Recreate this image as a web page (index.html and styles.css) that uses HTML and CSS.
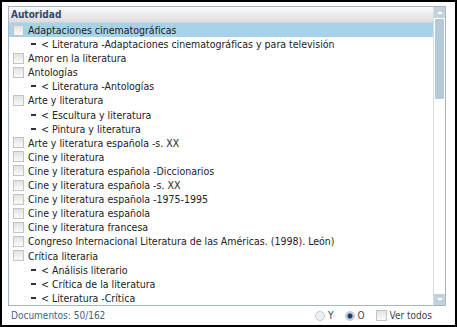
FILE: index.html
```html
<!DOCTYPE html>
<html lang="es">
<head>
  <meta charset="UTF-8">
  <title>Autoridad</title>
  <link rel="stylesheet" href="styles.css">
</head>
<body>
  <div class="frame">
    <div class="panel">
      <div class="list">
        <div class="list-head">Autoridad</div>
        <div class="rows">
          <div class="row selected"><span class="check"></span>Adaptaciones cinematográficas</div>
          <div class="row sub"><span class="dash"></span>&lt; Literatura -Adaptaciones cinematográficas y para televisión</div>
          <div class="row"><span class="check"></span>Amor en la literatura</div>
          <div class="row"><span class="check"></span>Antologías</div>
          <div class="row sub"><span class="dash"></span>&lt; Literatura -Antologías</div>
          <div class="row"><span class="check"></span>Arte y literatura</div>
          <div class="row sub"><span class="dash"></span>&lt; Escultura y literatura</div>
          <div class="row sub"><span class="dash"></span>&lt; Pintura y literatura</div>
          <div class="row"><span class="check"></span>Arte y literatura española -s. XX</div>
          <div class="row"><span class="check"></span>Cine y literatura</div>
          <div class="row"><span class="check"></span>Cine y literatura española -Diccionarios</div>
          <div class="row"><span class="check"></span>Cine y literatura española -s. XX</div>
          <div class="row"><span class="check"></span>Cine y literatura española -1975-1995</div>
          <div class="row"><span class="check"></span>Cine y literatura española</div>
          <div class="row"><span class="check"></span>Cine y literatura francesa</div>
          <div class="row"><span class="check"></span>Congreso Internacional Literatura de las Américas. (1998). León)</div>
          <div class="row"><span class="check"></span>Crítica literaria</div>
          <div class="row sub"><span class="dash"></span>&lt; Análisis literario</div>
          <div class="row sub"><span class="dash"></span>&lt; Crítica de la literatura</div>
          <div class="row sub"><span class="dash"></span>&lt; Literatura -Crítica</div>
        </div>
      </div>
      <div class="scrollbar">
        <div class="arrow up"></div>
        <div class="track"><div class="thumb"></div></div>
        <div class="arrow down"></div>
      </div>
    </div>
    <div class="footer">
      <span class="count">Documentos: 50/162</span>
      <div class="options">
        <label class="opt"><span class="radio"></span>Y</label>
        <label class="opt"><span class="radio on"></span>O</label>
        <label class="opt"><span class="check"></span>Ver todos</label>
      </div>
    </div>
  </div>
</body>
</html>
```

FILE: styles.css
```css
body { margin: 0; background: #fff; font-family: "DejaVu Sans Condensed", "DejaVu Sans", sans-serif; font-size: 10.5px; color: #222; }
.frame {
  width: 457px;
  height: 327px;
  box-sizing: border-box;
  border: 2px solid #000;
  padding: 4px 9px 0 6px;
  display: flex;
  flex-direction: column;
}
.panel {
  height: 300px;
  box-sizing: border-box;
  border: 1px solid #a7b6c2;
  display: flex;
  overflow: hidden;
}
.list { flex: 1; min-width: 0; }
.list-head {
  height: 15px;
  line-height: 15px;
  padding-left: 2px;
  font-size: 10px;
  font-weight: bold;
  color: #32496a;
  background: linear-gradient(#fbfbfb, #dcdcdc);
  border-bottom: 1px solid #cfd3d6;
}
.row {
  height: 14.1px;
  line-height: 14.1px;
  white-space: nowrap;
  display: flex;
  align-items: center;
  padding-left: 4px;
}
.row.selected { background: #a6d3e8; }
.row.sub { padding-left: 22px; }
.check {
  width: 9px;
  height: 9px;
  border: 1px solid #c4c4c4;
  background: linear-gradient(#e2e2e2, #fafafa);
  margin-right: 4px;
  flex: none;
}
.dash {
  width: 5px;
  height: 2px;
  background: #333;
  margin-right: 5px;
}
.scrollbar {
  width: 11px;
  border-left: 1px solid #d4dde3;
  display: flex;
  flex-direction: column;
  background: #fff;
}
.arrow {
  height: 11px;
  background: #c3d1dc;
  position: relative;
}
.arrow::after {
  content: "";
  position: absolute;
  left: 3px;
  border-left: 3px solid transparent;
  border-right: 3px solid transparent;
}
.arrow.up::after { top: 4px; border-bottom: 3px solid #fff; }
.arrow.down::after { top: 4px; border-top: 3px solid #fff; }
.track { flex: 1; padding: 1px 0 0 1px; }
.thumb { height: 80px; background: #b6c9d8; width: 9px; }
.footer {
  flex: 1;
  display: flex;
  align-items: center;
  padding-left: 3px;
  font-size: 10px;
  color: #45617f;
}
.count { flex: 1; }
.options { display: flex; align-items: center; padding-right: 14px; color: #444; }
.opt { display: flex; align-items: center; margin-left: 11px; }
.radio {
  width: 8px;
  height: 8px;
  border-radius: 50%;
  border: 1px solid #c0c8cf;
  background: #eef1f3;
  margin-right: 3px;
  box-sizing: content-box;
}
.radio.on { background: radial-gradient(circle, #1e3a5e 0 2px, #bcd0e2 3px); }
.opt .check { margin-right: 3px; }
```
